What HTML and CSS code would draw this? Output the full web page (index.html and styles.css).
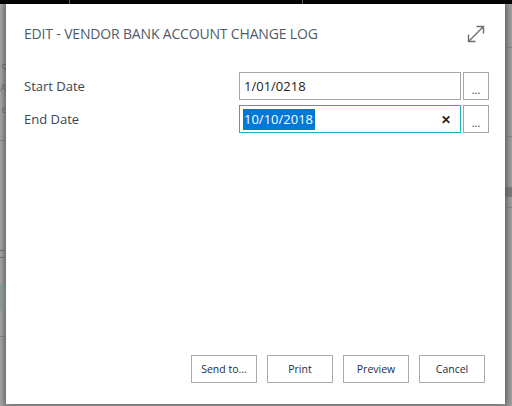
FILE: index.html
```html
<!DOCTYPE html>
<html>
<head>
<meta charset="utf-8">
<link rel="stylesheet" href="styles.css">
</head>
<body>
<div class="page">
  <div class="topbar">
    <span class="seg seg-a"></span>
    <span class="seg seg-b"></span>
    <span class="seg seg-c"></span>
  </div>
  <div class="workspace">
    <div class="side side-left">
      <div class="hline hl-1"></div>
      <div class="frag f1">c</div>
      <div class="frag f2">A</div>
      <div class="frag f3">c</div>
      <div class="hline hl-2"></div>
      <div class="dash d1"></div>
      <div class="dash d2"></div>
      <div class="tealblock"></div>
      <div class="hline hl-3"></div>
    </div>
    <div class="center"></div>
    <div class="side side-right">
      <div class="hline rl-1"></div>
      <div class="hline rl-2"></div>
      <div class="rblock"></div>
      <div class="hline rl-3"></div>
    </div>
  </div>
</div>

<div class="dialog" role="dialog">
  <header class="dlg-head">
    <h1 class="dlg-title">EDIT - VENDOR BANK ACCOUNT CHANGE LOG</h1>
    <svg class="expand" width="20" height="20" viewBox="0 0 20 20" aria-hidden="true">
      <path d="M2.5 17.5 L17.5 2.5 M10.5 2.5 H17.5 V9.5 M2.5 10.5 V17.5 H9.5" fill="none" stroke="#6e6e6e" stroke-width="1.4"/>
    </svg>
  </header>
  <div class="fields">
    <div class="field-row">
      <label class="field-label">Start Date</label>
      <div class="input">1/01/0218</div>
      <button class="lookup">...</button>
    </div>
    <div class="field-row">
      <label class="field-label">End Date</label>
      <div class="input input-focus"><span class="sel">10/10/2018</span><span class="clear">✕</span></div>
      <button class="lookup">...</button>
    </div>
  </div>
  <footer class="actions">
    <button class="btn">Send to...</button>
    <button class="btn">Print</button>
    <button class="btn">Preview</button>
    <button class="btn">Cancel</button>
  </footer>
</div>
</body>
</html>
```
FILE: styles.css
```css
html, body {
  margin: 0;
  padding: 0;
}
body {
  width: 512px;
  height: 406px;
  overflow: hidden;
  position: relative;
  background: #9c9c9c;
  font-family: "Open Sans", "Noto Sans", sans-serif;
}
.page {
  display: flex;
  flex-direction: column;
  height: 406px;
}
.topbar {
  height: 4px;
  background: #050505;
  display: flex;
}
.seg {
  height: 4px;
  border-right: 1px solid #6a6a6a;
}
.seg-a { width: 69px; }
.seg-b { width: 232px; }
.seg-c { flex: 1; border-right: 0; }
.workspace {
  flex: 1;
  display: flex;
}
.side {
  width: 6px;
  overflow: hidden;
  display: flex;
  flex-direction: column;
}
.side-left {
  background: linear-gradient(to right, #a6a6a6, #8e8e8e);
}
.side-right {
  background: linear-gradient(to right, #8a8a8a, #a0a0a0);
  width: 7px;
}
.center { flex: 1; }
.hline {
  height: 1px;
  background: #858585;
  flex: none;
}
.frag {
  display: flex;
  justify-content: flex-end;
  white-space: nowrap;
  height: 22px;
  font-size: 9px;
  line-height: 22px;
  color: #707070;
  flex: none;
}
.hl-1 { margin-top: 43px; background: #9a9a9a; }
.f1 { margin-top: 7px; }
.hl-2 { margin-top: 19px; }
.dash {
  height: 1px;
  width: 4px;
  background: #6f6f6f;
  flex: none;
}
.d1 { margin-top: 109px; }
.d2 { margin-top: 6px; }
.tealblock {
  height: 26px;
  margin-top: 27px;
  background: #8d9d9b;
  flex: none;
}
.hl-3 { margin-top: 25px; }
.rl-1 { margin-top: 43px; }
.rl-2 { margin-top: 88px; }
.rblock {
  margin-top: 50px;
  height: 10px;
  background: #7a7a7a;
  flex: none;
}
.rl-3 { margin-top: 10px; }

/* dialog */
.dialog {
  position: absolute;
  left: 6px;
  top: 4px;
  width: 499px;
  height: 400px;
  background: #ffffff;
  box-shadow: 0 0 7px rgba(0, 0, 0, 0.45);
  display: flex;
  flex-direction: column;
  box-sizing: border-box;
}
.dlg-head {
  display: flex;
  align-items: center;
  justify-content: space-between;
  padding: 20px 19px 0 18px;
  height: 20px;
}
.dlg-title {
  margin: 0;
  font-size: 14px;
  font-weight: 400;
  line-height: 20px;
  color: #505b69;
  letter-spacing: -0.17px;
}
.expand { display: block; }
.fields {
  display: flex;
  flex-direction: column;
  gap: 5px;
  margin-top: 28px;
  padding: 0 16px 0 18px;
}
.field-row {
  display: flex;
  align-items: center;
  height: 28px;
}
.field-label {
  width: 215px;
  font-size: 13px;
  color: #3b4552;
}
.input {
  width: 222px;
  height: 28px;
  box-sizing: border-box;
  border: 1px solid #a6a6a6;
  display: flex;
  align-items: center;
  padding: 0 8px 0 4px;
  font-size: 13px;
  color: #222;
}
.input-focus {
  border-color: #1ab2c4;
  justify-content: space-between;
  padding-left: 3px;
}
.sel {
  background: #0078d7;
  color: #fff;
  line-height: 21px;
  padding: 0 2px 0 1px;
}
.clear {
  font-size: 12px;
  font-weight: 700;
  color: #222;
  margin-right: 1px;
}
.lookup {
  margin-left: 2px;
  width: 26px;
  height: 28px;
  box-sizing: border-box;
  border: 1px solid #a6a6a6;
  background: #fff;
  padding: 0;
  font-family: inherit;
  font-size: 11px;
  color: #333;
  line-height: 28px;
  padding-top: 3px;
}
.actions {
  margin-top: auto;
  display: flex;
  justify-content: flex-end;
  gap: 10px;
  padding: 0 20px 21px 0;
}
.btn {
  width: 66px;
  height: 28px;
  box-sizing: border-box;
  border: 1px solid #a9a9a9;
  background: #fff;
  font-family: inherit;
  font-size: 10.5px;
  color: #1d2c45;
  padding: 0;
}
```
